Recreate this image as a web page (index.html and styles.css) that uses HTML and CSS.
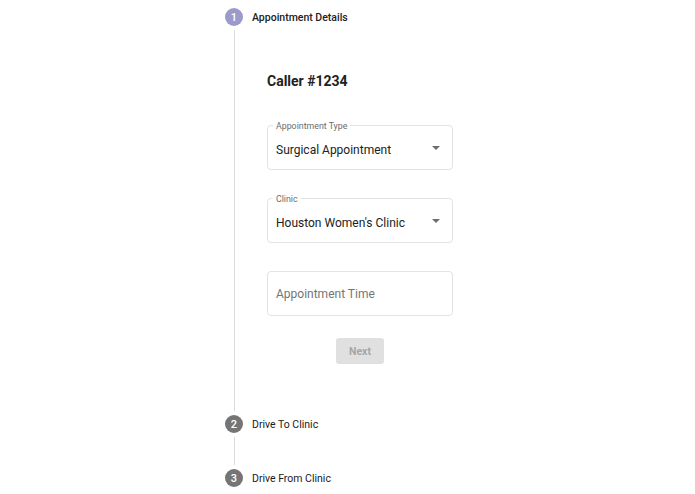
FILE: index.html
```html
<!DOCTYPE html>
<html>
<head>
<meta charset="utf-8">
<link rel="stylesheet" href="styles.css">
</head>
<body>
<div class="stepper">
  <div class="step">
    <div class="step-head">
      <span class="step-icon active">1</span>
      <span class="step-label active">Appointment Details</span>
    </div>
    <div class="step-content">
      <h2 class="caller">Caller #1234</h2>
      <div class="field select">
        <span class="field-label">Appointment Type</span>
        <span class="field-value">Surgical Appointment</span>
        <svg class="arrow" width="8" height="4" viewBox="0 0 8 4"><path d="M0 0 L8 0 L4 4 Z" fill="#6e6e6e"/></svg>
      </div>
      <div class="field select">
        <span class="field-label">Clinic</span>
        <span class="field-value">Houston Women's Clinic</span>
        <svg class="arrow" width="8" height="4" viewBox="0 0 8 4"><path d="M0 0 L8 0 L4 4 Z" fill="#6e6e6e"/></svg>
      </div>
      <div class="field">
        <span class="field-placeholder">Appointment Time</span>
      </div>
      <div class="actions">
        <button class="next" disabled>Next</button>
      </div>
    </div>
  </div>
  <div class="step">
    <div class="step-head">
      <span class="step-icon">2</span>
      <span class="step-label">Drive To Clinic</span>
    </div>
    <div class="connector"></div>
  </div>
  <div class="step">
    <div class="step-head">
      <span class="step-icon">3</span>
      <span class="step-label">Drive From Clinic</span>
    </div>
  </div>
</div>
</body>
</html>
```

FILE: styles.css
```css
html, body {
  margin: 0;
  padding: 0;
  background: #ffffff;
  font-family: Roboto, "Liberation Sans", Arial, sans-serif;
}

.stepper {
  display: flex;
  flex-direction: column;
  padding: 8px 0 0 225px;
}

.step-head {
  display: flex;
  align-items: center;
  gap: 9px;
  height: 18px;
}

.step-icon {
  width: 18px;
  height: 18px;
  border-radius: 50%;
  background: #757575;
  color: #ffffff;
  font-size: 11px;
  font-weight: 500;
  display: flex;
  align-items: center;
  justify-content: center;
}

.step-icon.active {
  background: #9b9bcb;
}

.step-label {
  font-size: 10.5px;
  color: #212121;
  font-weight: 400;
}

.step-label.active {
  font-weight: 500;
}

.step-content {
  margin: 4px 0 4px 8.5px;
  border-left: 1px solid #dcdcdc;
  padding: 41px 0 47px 32.5px;
  width: 186px;
}

.connector {
  margin: 4px 0 4px 8.5px;
  border-left: 1px solid #dcdcdc;
  height: 28px;
}

.caller {
  margin: 0 0 34px 0;
  font-size: 14px;
  font-weight: 700;
  line-height: 20px;
  color: #212121;
}

.field {
  position: relative;
  box-sizing: border-box;
  height: 45px;
  border: 1px solid #e3e3e3;
  border-radius: 4px;
  margin-bottom: 28px;
  display: flex;
  align-items: center;
  padding: 0 0 0 8px;
}

.field.select {
  padding-top: 5px;
}

.field-label {
  position: absolute;
  left: 5px;
  top: -5px;
  padding: 0 3px;
  background: #ffffff;
  font-size: 8.8px;
  line-height: 11px;
  color: #6b6b6b;
}

.field-value {
  font-size: 12px;
  color: #212121;
}

.field-placeholder {
  font-size: 12px;
  color: #757575;
}

.arrow {
  position: absolute;
  right: 12px;
  top: 20px;
}

.actions {
  display: flex;
  justify-content: center;
  margin-top: -6px;
}

.next {
  width: 48px;
  height: 26px;
  border: none;
  border-radius: 3px;
  background: #e0e0e0;
  color: #a6a6a6;
  font-family: Roboto, "Liberation Sans", Arial, sans-serif;
  font-size: 10.5px;
  font-weight: 700;
  padding: 0;
}
```
